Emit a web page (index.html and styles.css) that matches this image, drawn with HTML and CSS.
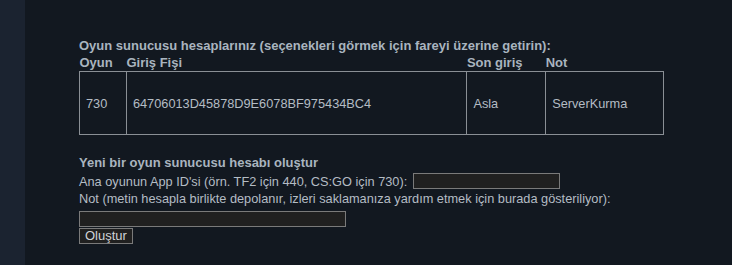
FILE: index.html
```html
<!DOCTYPE html>
<html lang="tr">
<head>
<meta charset="utf-8">
<title>Oyun sunucusu hesapları</title>
<link rel="stylesheet" href="styles.css">
</head>
<body>
<div class="page">
  <div class="sidebar"></div>
  <div class="main">
    <div class="title">Oyun sunucusu hesaplarınız (seçenekleri görmek için fareyi üzerine getirin):</div>
    <table class="accounts">
      <thead>
        <tr>
          <th class="c1">Oyun</th>
          <th class="c2">Giriş Fişi</th>
          <th class="c3">Son giriş</th>
          <th class="c4">Not</th>
        </tr>
      </thead>
      <tbody>
        <tr>
          <td>730</td>
          <td>64706013D45878D9E6078BF975434BC4</td>
          <td>Asla</td>
          <td>ServerKurma</td>
        </tr>
      </tbody>
    </table>
    <form class="create">
      <div class="title">Yeni bir oyun sunucusu hesabı oluştur</div>
      <div class="row row-appid">Ana oyunun App ID'si (örn. TF2 için 440, CS:GO için 730): <input class="appid" type="text"></div>
      <div class="row">Not (metin hesapla birlikte depolanır, izleri saklamanıza yardım etmek için burada gösteriliyor):</div>
      <div class="row row-memo"><input class="memo" type="text"></div>
      <div class="row"><button class="btn" type="button">Oluştur</button></div>
    </form>
  </div>
</div>
</body>
</html>
```
FILE: styles.css
```css
html, body {
  margin: 0;
  padding: 0;
  background: #121820;
}
.page {
  display: flex;
  height: 265px;
  font-family: "Liberation Sans", Arial, sans-serif;
  font-size: 12.75px;
  color: #b4bcc4;
}
.sidebar {
  width: 25px;
  background: #1b2330;
  flex: none;
}
.main {
  padding: 37px 0 0 54px;
}
.title {
  font-weight: bold;
  font-size: 13px;
  color: #a9b4bf;
  line-height: 17px;
}
.accounts {
  border-collapse: collapse;
  width: 585px;
}
.accounts th {
  text-align: left;
  padding: 0;
  font-weight: bold;
  font-size: 13px;
  color: #a9b4bf;
  line-height: 17px;
  vertical-align: top;
}
.c1 { width: 47px; }
.c2 { width: 341px; }
.c3 { width: 79px; }
.c4 { width: 118px; }
.accounts td {
  border: 1px solid #8a8f95;
  height: 62px;
  padding: 0 6px;
  vertical-align: middle;
}
.create {
  margin: 19px 0 0;
}
.row {
  height: 18px;
  display: flex;
  align-items: center;
}
.row-appid {
  align-items: flex-end;
}
.row-memo {
  height: 20px;
  align-items: flex-end;
}
.appid,
.memo {
  box-sizing: border-box;
  height: 16px;
  margin: 0;
  padding: 1px;
  background: #202020;
  border: 1px solid #7a7a7a;
  color: #ccc;
}
.appid {
  width: 147px;
  margin-left: 6px;
}
.memo {
  width: 267px;
}
.btn {
  box-sizing: border-box;
  margin: 0;
  padding: 0 5px;
  height: 16px;
  background: #202020;
  border: 1px solid #7a7a7a;
  color: #d0d4d8;
  font-family: "Liberation Sans", Arial, sans-serif;
  font-size: 13px;
  line-height: 14px;
}
```
